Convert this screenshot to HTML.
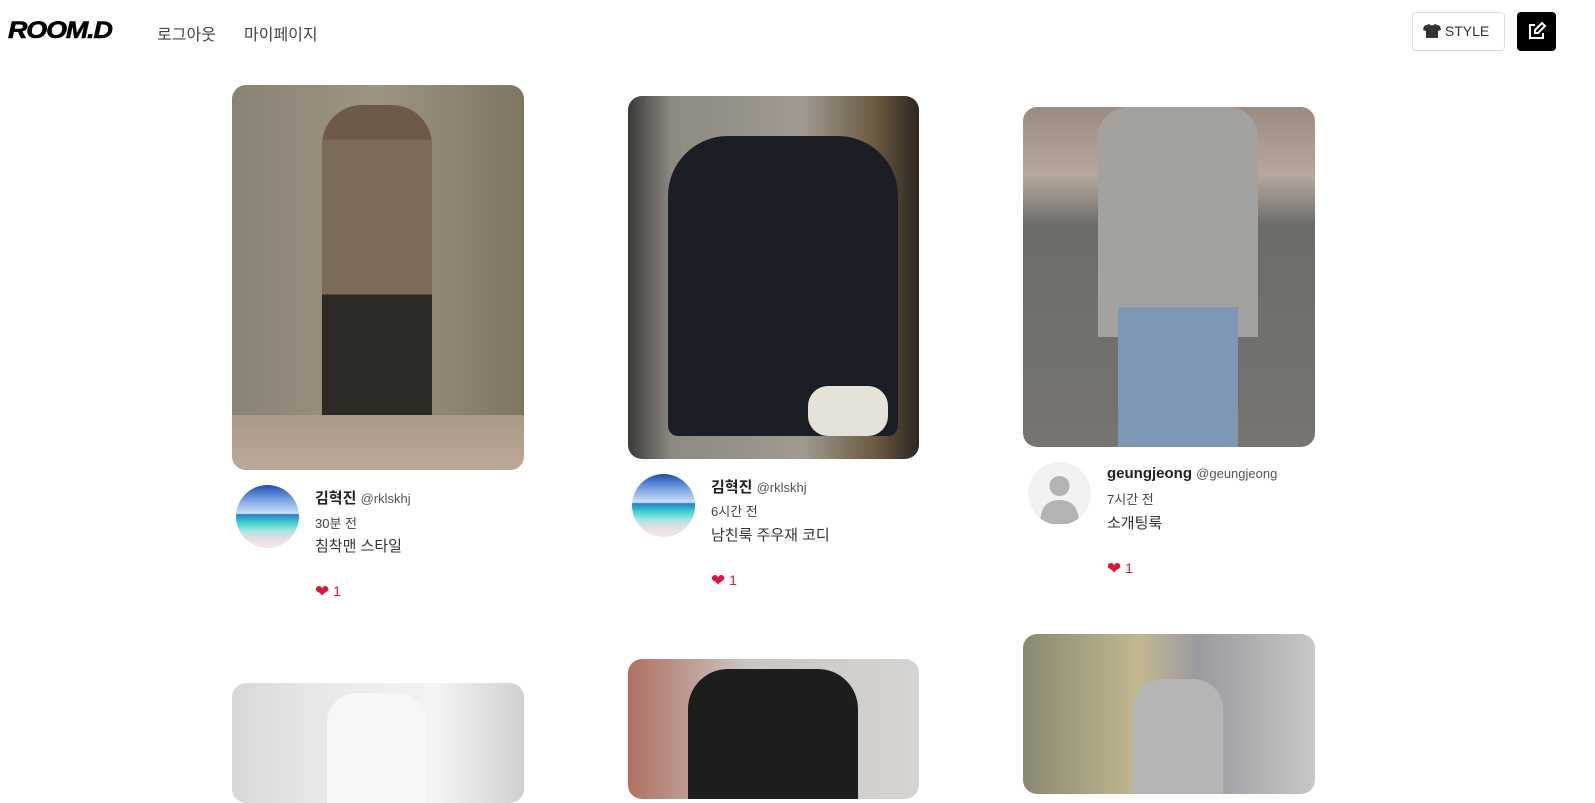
<!DOCTYPE html>
<html><head><meta charset="utf-8"><style>
*{margin:0;padding:0;box-sizing:border-box}
body{width:1595px;height:783px;overflow:hidden;background:#fff;font-family:"Liberation Sans","Noto Sans CJK KR",sans-serif;color:#333;position:relative}
.abs{position:absolute}
.logo{left:8px;top:17px;font-size:24px;font-weight:900;font-style:italic;letter-spacing:-1px;color:#000;transform:scaleX(1.12);transform-origin:left;-webkit-text-stroke:0.6px #000}
.nav{top:21px;font-size:16px;color:#444}
.img{border-radius:14px;overflow:hidden}
.av{width:63px;height:63px;border-radius:50%;overflow:hidden}
.beach{background:linear-gradient(#1e4fb0 0%,#7fa6e6 25%,#cfe0f5 45%,#2a7fc4 47%,#3ed1d0 60%,#9fe6e0 72%,#e7e0e0 85%,#f2e6ea 100%)}
.gray{background:#f2f2f2}
.nm{font-size:15px;font-weight:bold;color:#222}
.nm span{font-size:13px;font-weight:normal;color:#555}
.tm{font-size:13px;color:#444}
.cap{font-size:15px;color:#333}
.hr{font-size:14px;color:#e0123a}
.hr b{font-size:17px;font-weight:normal;vertical-align:-1px}
</style></head><body>
<div class="abs logo">ROOM.D</div>
<div class="abs nav" style="left:157px">로그아웃</div>
<div class="abs nav" style="left:244px">마이페이지</div>
<div class="abs" style="left:1412px;top:12px;width:93px;height:39px;border:1px solid #ddd;border-radius:4px;font-size:14px;color:#333;padding:10px 0 0 10px">
<svg width="18" height="14" viewBox="0 0 18 14" style="vertical-align:-2px"><path d="M6 0 L1 2 L0 6 L3 7 L3 14 L15 14 L15 7 L18 6 L17 2 L12 0 Q9 3 6 0Z" fill="#333"/></svg> STYLE</div>
<div class="abs" style="left:1517px;top:12px;width:39px;height:39px;background:#000;border-radius:4px">
<svg width="39" height="39" viewBox="0 0 39 39"><path d="M18 13 H13 V26 H26 V21" stroke="#fff" stroke-width="2" fill="none"/><path d="M18 21 L18 18 L25 11 L28 14 L21 21Z" stroke="#fff" stroke-width="2" fill="none"/></svg></div>

<div class="abs img" style="left:232px;top:85px;width:292px;height:385px;background:linear-gradient(90deg,#8a8272,#9d9484 50%,#7e7563);">
<div class="abs" style="left:90px;top:20px;width:110px;height:345px;background:linear-gradient(#6e5a48 0 10%,#7b6b58 10% 55%,#2c2a25 55% 100%);border-radius:40px 40px 6px 6px"></div>
<div class="abs" style="left:0;top:330px;width:292px;height:55px;background:linear-gradient(#a89a88,#bda898)"></div></div>
<div class="abs av beach" style="left:236px;top:485px"></div>
<div class="abs nm" style="left:315px;top:487px">김혁진 <span>@rklskhj</span></div>
<div class="abs tm" style="left:315px;top:513px">30분 전</div>
<div class="abs cap" style="left:315px;top:535px">침착맨 스타일</div>
<div class="abs hr" style="left:315px;top:582px"><b>❤</b> 1</div>

<div class="abs img" style="left:628px;top:96px;width:291px;height:363px;background:linear-gradient(90deg,#3a3a38,#8e8a82 15%,#a09a90 60%,#6a5a40 85%,#2b2620)">
<div class="abs" style="left:40px;top:40px;width:230px;height:300px;background:#1c1e26;border-radius:60px 60px 10px 10px"></div>
<div class="abs" style="left:180px;top:290px;width:80px;height:50px;background:#e6e2da;border-radius:20px"></div></div>
<div class="abs av beach" style="left:632px;top:474px"></div>
<div class="abs nm" style="left:711px;top:476px">김혁진 <span>@rklskhj</span></div>
<div class="abs tm" style="left:711px;top:501px">6시간 전</div>
<div class="abs cap" style="left:711px;top:524px">남친룩 주우재 코디</div>
<div class="abs hr" style="left:711px;top:571px"><b>❤</b> 1</div>

<div class="abs img" style="left:1023px;top:107px;width:292px;height:340px;background:linear-gradient(#9a8a80 0,#b8a89c 20%,#6c6c6a 35%,#77746f 100%)">
<div class="abs" style="left:75px;top:0;width:160px;height:230px;background:#a3a29e;border-radius:30px 30px 0 0"></div>
<div class="abs" style="left:95px;top:200px;width:120px;height:140px;background:#7d97b5"></div></div>
<div class="abs av gray" style="left:1028px;top:462px"><svg width="63" height="63" viewBox="0 0 63 63"><circle cx="31.5" cy="24" r="10" fill="#b3b3b3"/><path d="M12 62 Q12 38 31.5 38 Q51 38 51 62Z" fill="#b3b3b3"/></svg></div>
<div class="abs nm" style="left:1107px;top:465px">geungjeong <span>@geungjeong</span></div>
<div class="abs tm" style="left:1107px;top:489px">7시간 전</div>
<div class="abs cap" style="left:1107px;top:512px">소개팅룩</div>
<div class="abs hr" style="left:1107px;top:559px"><b>❤</b> 1</div>

<div class="abs img" style="left:232px;top:683px;width:292px;height:120px;background:linear-gradient(90deg,#d8d8d8,#e8e8e8 30%,#f4f4f4 70%,#d0d0d0)">
<div class="abs" style="left:95px;top:10px;width:100px;height:110px;background:#f7f7f5;border-radius:30px 30px 0 0"></div></div>
<div class="abs img" style="left:628px;top:659px;width:291px;height:140px;background:linear-gradient(90deg,#b07060,#c9c5c2 40%,#d6d4d2)">
<div class="abs" style="left:60px;top:10px;width:170px;height:130px;background:#1d1d1d;border-radius:40px 40px 0 0"></div></div>
<div class="abs img" style="left:1023px;top:634px;width:292px;height:160px;background:linear-gradient(90deg,#8a8a70,#c2b890 40%,#9a9aa0 60%,#c8c8c8)">
<div class="abs" style="left:110px;top:45px;width:90px;height:120px;background:#b5b5b5;border-radius:30px 30px 0 0"></div></div>
</body></html>
